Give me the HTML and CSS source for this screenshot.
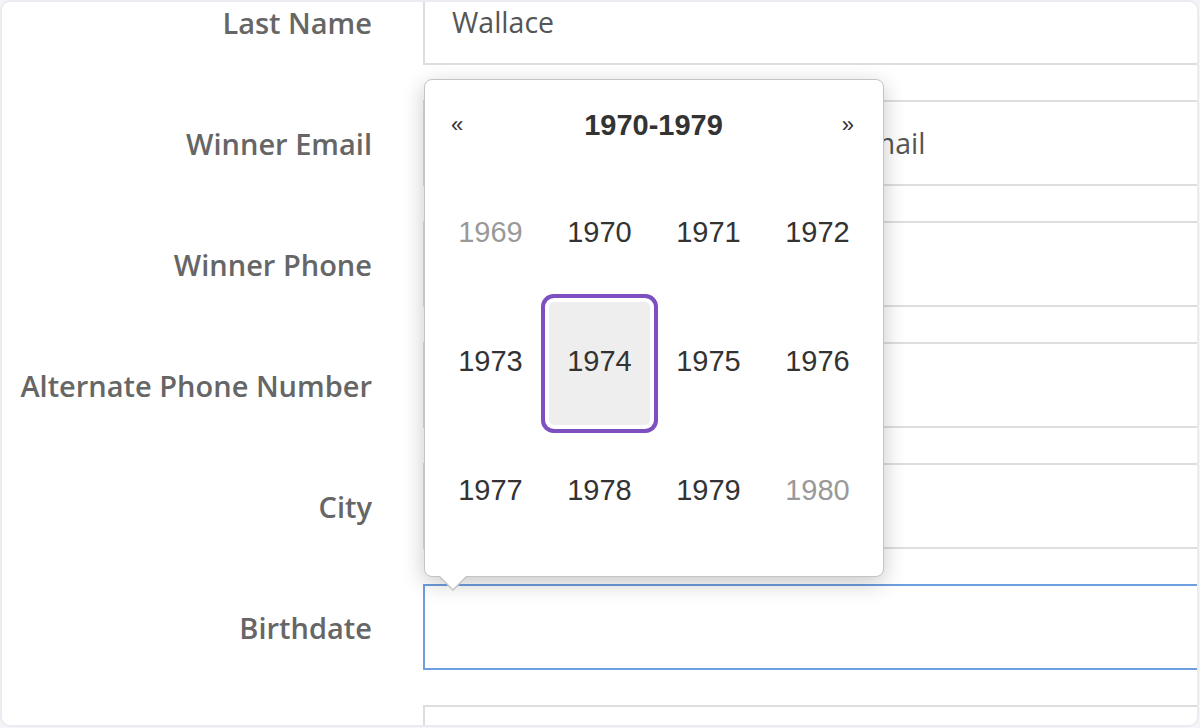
FILE: index.html
```html
<!DOCTYPE html>
<html lang="en">
<head>
<meta charset="utf-8">
<title>Winner Form</title>
<link rel="stylesheet" href="styles.css">
</head>
<body>
<div class="card">
  <form class="form">
    <div class="row">
      <label class="label">Last Name</label>
      <div class="field">Wallace</div>
    </div>
    <div class="row">
      <label class="label">Winner Email</label>
      <div class="field">Provide your winner's contact email</div>
    </div>
    <div class="row">
      <label class="label">Winner Phone</label>
      <div class="field"></div>
    </div>
    <div class="row">
      <label class="label">Alternate Phone Number</label>
      <div class="field"></div>
    </div>
    <div class="row">
      <label class="label">City</label>
      <div class="field"></div>
    </div>
    <div class="row">
      <label class="label">Birthdate</label>
      <div class="field focused"></div>
    </div>
    <div class="row">
      <span class="label"></span>
      <div class="field"></div>
    </div>
  </form>

  <div class="picker">
    <div class="picker-head">
      <span class="nav">&laquo;</span>
      <span class="switch">1970-1979</span>
      <span class="nav">&raquo;</span>
    </div>
    <div class="years">
      <span class="year old">1969</span>
      <span class="year">1970</span>
      <span class="year">1971</span>
      <span class="year">1972</span>
      <span class="year">1973</span>
      <span class="year active">1974</span>
      <span class="year">1975</span>
      <span class="year">1976</span>
      <span class="year">1977</span>
      <span class="year">1978</span>
      <span class="year">1979</span>
      <span class="year old">1980</span>
    </div>
  </div>
</div>
</body>
</html>
```

FILE: styles.css
```css
html, body {
  margin: 0;
  padding: 0;
  background: #f5f5f9;
}

.card {
  position: relative;
  width: 1199px;
  height: 727px;
  box-sizing: border-box;
  border: 2px solid #ebebf2;
  border-radius: 10px;
  background: #fff;
  overflow: hidden;
}

.form {
  margin-top: -23px;
  display: flex;
  flex-direction: column;
  gap: 35px;
}

.row {
  display: grid;
  grid-template-columns: 370px 840px;
  column-gap: 51px;
  align-items: center;
}

.label {
  text-align: right;
  font-family: "Open Sans", "Liberation Sans", sans-serif;
  font-weight: 600;
  font-size: 29px;
  color: #666;
  white-space: nowrap;
}

.field {
  height: 86px;
  box-sizing: border-box;
  border: 2px solid #dedede;
  padding: 0 27px;
  display: flex;
  align-items: center;
  font-family: "Open Sans", "Liberation Sans", sans-serif;
  font-size: 28.5px;
  color: #555;
  white-space: nowrap;
}

.field.focused {
  border-color: #6d9ee0;
}

.picker {
  position: absolute;
  left: 422px;
  top: 77px;
  width: 460px;
  height: 498px;
  box-sizing: border-box;
  border: 1px solid #c4c4c4;
  border-radius: 8px;
  background: #fff;
  padding: 0 11px 21px;
  box-shadow: 0 6px 22px rgba(0, 0, 0, 0.22);
  font-family: "Liberation Sans", Arial, sans-serif;
  color: #333;
}

.picker::before {
  content: "";
  position: absolute;
  left: 14px;
  bottom: -15px;
  border-left: 14px solid transparent;
  border-right: 14px solid transparent;
  border-top: 14px solid #c4c4c4;
}

.picker::after {
  content: "";
  position: absolute;
  left: 15px;
  bottom: -13px;
  border-left: 13px solid transparent;
  border-right: 13px solid transparent;
  border-top: 13px solid #fff;
}

.picker-head {
  height: 88px;
  padding-top: 2px;
  box-sizing: border-box;
  display: flex;
  align-items: center;
  justify-content: space-between;
  padding-left: 15px;
  padding-right: 18px;
}

.nav {
  font-size: 22px;
  color: #333;
}

.switch {
  font-size: 29px;
  font-weight: 700;
  color: #333;
  margin-left: 2px;
}

.years {
  display: grid;
  grid-template-columns: repeat(4, 109px);
  grid-template-rows: repeat(3, 129px);
}

.year {
  margin: 5px 4px 1px;
  padding-bottom: 4px;
  display: flex;
  align-items: center;
  justify-content: center;
  font-size: 29px;
  color: #333;
  border-radius: 5px;
}

.year.old {
  color: #999;
}

.year.active {
  background: #eee;
  box-shadow: 0 0 0 4px #fff, 0 0 0 8px #7e4fc0;
}
```
